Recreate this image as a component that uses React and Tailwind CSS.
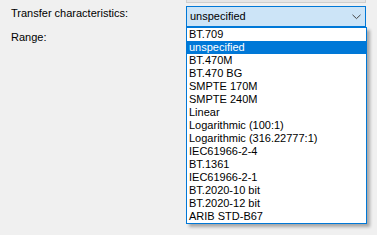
import React from 'react';

const options = [
  'BT.709',
  'unspecified',
  'BT.470M',
  'BT.470 BG',
  'SMPTE 170M',
  'SMPTE 240M',
  'Linear',
  'Logarithmic (100:1)',
  'Logarithmic (316.22777:1)',
  'IEC61966-2-4',
  'BT.1361',
  'IEC61966-2-1',
  'BT.2020-10 bit',
  'BT.2020-12 bit',
  'ARIB STD-B67',
];

const selected = 'unspecified';

export default function App() {
  return (
    <div
      className="relative h-[235px] w-[377px] overflow-hidden bg-[#f0f0f0] text-[11px] leading-[13px] text-black"
      style={{ fontFamily: '"Liberation Sans", Arial, sans-serif' }}
    >
      {/* bottom edge of the field above */}
      <div className="ml-[186px] h-[3px] w-[180px] border-x border-b border-[#cfcfcf] bg-[#e6e6e6]" />

      <div className="mt-[3px] flex items-start">
        <div className="w-[186px] pl-[11px] pt-[1px]">Transfer characteristics:</div>
        <div className="flex h-[21px] w-[180px] items-center justify-between border border-[#0078d7] bg-[#cce4f7] pl-[3px] pr-[3px]">
          <span>{selected}</span>
          <svg width="9" height="6" viewBox="0 0 9 6" className="mr-[1px]">
            <polyline points="0.5,0.8 4.5,4.6 8.5,0.8" fill="none" stroke="#444" strokeWidth="1" />
          </svg>
        </div>
      </div>

      <div className="mt-[4px] pl-[11px]">Range:</div>

      {/* open dropdown list */}
      <div className="absolute left-[186px] top-[27px] w-[181px] border border-[#0078d7] bg-white shadow-[3px_3px_3px_rgba(0,0,0,0.3)]">
        {options.map((opt) => (
          <div
            key={opt}
            className={
              opt === selected
                ? 'h-[13px] whitespace-nowrap bg-[#0078d7] pl-[2px] text-white'
                : 'h-[13px] whitespace-nowrap pl-[2px]'
            }
          >
            {opt}
          </div>
        ))}
      </div>
    </div>
  );
}
